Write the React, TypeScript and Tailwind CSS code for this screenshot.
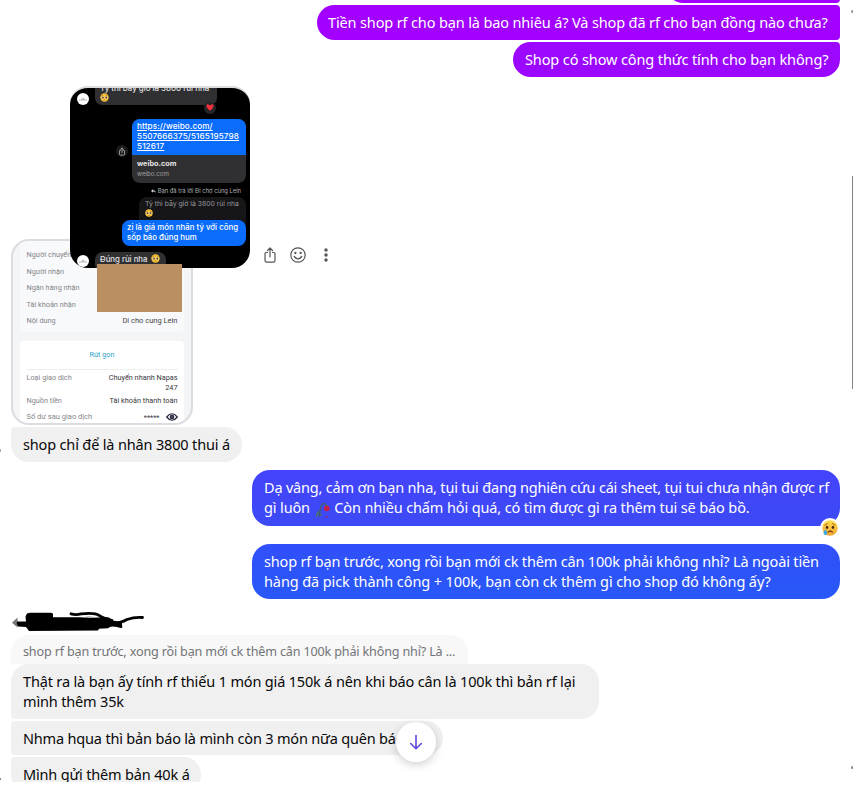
import type { ReactNode } from "react";

function PleadingFace({ className = "" }: { className?: string }) {
  return (
    <svg viewBox="0 0 20 20" className={className}>
      <circle cx="10" cy="10" r="9.3" fill="#f8c53a" />
      <circle cx="6.3" cy="10" r="3" fill="#fff" />
      <circle cx="13.7" cy="10" r="3" fill="#fff" />
      <circle cx="6.3" cy="10.2" r="2.4" fill="#5b3410" />
      <circle cx="13.7" cy="10.2" r="2.4" fill="#5b3410" />
      <circle cx="5.6" cy="9.3" r="0.8" fill="#fff" />
      <circle cx="13" cy="9.3" r="0.8" fill="#fff" />
      <path d="M3.5 6.3 6.5 4.6M16.5 6.3 13.5 4.6M8.3 15.6q1.7-1.2 3.4 0" stroke="#8a4a12" strokeWidth="1" fill="none" strokeLinecap="round" />
    </svg>
  );
}

function CryingFace() {
  return (
    <svg viewBox="0 0 20 20" className="size-4">
      <defs>
        <linearGradient id="cry" x1="0" y1="0" x2="0" y2="1">
          <stop offset="0" stopColor="#ffdf4d" />
          <stop offset="1" stopColor="#f2a431" />
        </linearGradient>
      </defs>
      <circle cx="10" cy="10" r="9.6" fill="url(#cry)" />
      <path d="M3.6 6.4q1.8-.4 3.3-2M16.4 6.4q-1.8-.4-3.3-2" stroke="#8a4d10" strokeWidth="1" fill="none" strokeLinecap="round" />
      <ellipse cx="6.3" cy="9.2" rx="1.5" ry="2" fill="#4a2b12" />
      <ellipse cx="13.7" cy="9.2" rx="1.5" ry="2" fill="#4a2b12" />
      <path d="M7.5 15.200q2.800-2.600 5.600 0" stroke="#6b3710" strokeWidth="1.3" fill="none" strokeLinecap="round" />
      <path d="M4.2 11.600q2.400 3.200 2.400 4.800a2.400 2.400 0 0 1-4.800 0q0-1.600 2.400-4.800z" fill="#3aa6ee" />
    </svg>
  );
}

function WiltedRose() {
  return (
    <svg viewBox="0 0 16 18" className="ml-px mr-0 inline-block h-[18px] w-4 align-[-6px]">
      <path d="M4 16C5 8 6 2.500 9 2.500c1.500 0 2.200.8 2.500 2" stroke="#3f5f5a" strokeWidth="1.200" fill="none" />
      <path d="M4 9.500q-3.500 2.500-3 6.500 2.800-1.500 3-6.500zM4.800 11.500q2.200.8 2.200 4-2.200-.6-2.200-4z" fill="#4f7369" />
      <path d="M9.600 5.400q2.200-2.400 4.300 0 1.400 2.200.2 4-3 1.700-4.900-.3-.8-2 .4-3.700z" fill="#c51f45" />
      <path d="M10.200 4.700q1.200-1.300 2.600-.3l-1 1.300z" fill="#567d50" />
      <path d="M10.500 15.800q1.700-1.300 3 .2-1.700 1-3-.2z" fill="#c51f45" />
    </svg>
  );
}

function ShareIcon({ className = "" }: { className?: string }) {
  return (
    <svg viewBox="0 0 16 18" className={className} fill="none" stroke="currentColor" strokeWidth="1.200" strokeLinecap="round" strokeLinejoin="round">
      <path d="M5.500 6.500H4.200A1.200 1.200 0 0 0 3 7.700v6.800a1.700 1.700 0 0 0 1.700 1.700h6.600a1.700 1.700 0 0 0 1.700-1.700V7.700a1.200 1.200 0 0 0-1.200-1.200h-1.300" />
      <path d="M8 11V2.200M5.500 4.500 8 2l2.500 2.500" />
    </svg>
  );
}

function SmileIcon() {
  return (
    <svg viewBox="0 0 18 18" className="size-[18px]" fill="none" stroke="#555" strokeWidth="1.200" strokeLinecap="round">
      <circle cx="9" cy="9" r="7.200" />
      <path d="M5.200 10.500q3.800 4.600 7.600 0" />
      <circle cx="6.400" cy="7" r=".55" fill="#555" />
      <circle cx="11.600" cy="7" r=".55" fill="#555" />
    </svg>
  );
}

function TinyAvatar() {
  return (
    <div className="flex size-3 shrink-0 items-center justify-center rounded-full bg-white">
      <svg viewBox="0 0 8 4" className="w-2">
        <path d="M0 3h8M2.500 2h3M4 .5v1" stroke="#888" strokeWidth=".6" />
      </svg>
    </div>
  );
}

function Sent({ className = "", children }: { className?: string; children: ReactNode }) {
  return <div className={`self-end whitespace-nowrap pt-[7px] text-[14.5px] leading-5 text-white ${className}`}>{children}</div>;
}

function Received({ className = "", children }: { className?: string; children: ReactNode }) {
  return <div className={`ml-[11px] whitespace-nowrap bg-[#f0f0f0] pl-3 pt-[7px] text-[14.5px] leading-5 text-[#080809] ${className}`}>{children}</div>;
}

function ChatPhoto() {
  return (
    <div className="h-[182px] w-[180px] shrink-0 overflow-hidden rounded-[18px] border-t-2 border-[#dedede] bg-black font-['Inter',sans-serif] text-[#e4e4e6]">
      <div className="flex h-[31px] items-start pl-[7px]">
        <div className="mt-[5px]">
          <TinyAvatar />
        </div>
        <div className="ml-[6px] h-[17px] w-[122px] overflow-hidden rounded-b-[7px] bg-[#303032] pl-[5px]">
          <div className="-mt-[5px] whitespace-nowrap text-[7.900px] font-medium leading-[10px]">Tỷ thì bây giờ là 3800 rùi nha</div>
          <PleadingFace className="size-[9px]" />
        </div>
        <div className="-ml-[13px] mt-[14px] flex size-3 items-center justify-center rounded-full bg-[#252527]">
          <svg viewBox="0 0 10 9" className="w-2">
            <path d="M5 8.500C-2 3.500 1-.3 3 .5Q4.500 1 5 2 5.500 1 7 .5C9-.3 12 3.500 5 8.500z" fill="#f3303c" />
          </svg>
        </div>
      </div>
      <div className="flex items-center justify-end pr-1">
        <div className="mr-[4px] flex size-3 items-center justify-center rounded-full bg-[#1c1c1e]">
          <ShareIcon className="h-[9px] w-[8px]" />
        </div>
        <div className="h-16 w-[114px] overflow-hidden rounded-[8px] bg-[#303032]">
          <div className="h-9 bg-[#0a6cfa] pl-[5px] pt-[3px] text-[8.200px] font-medium leading-[9.800px] tracking-[0.080px] text-white underline">
            https://weibo.com/
            <br />
            5507666375/5165195798
            <br />
            512617
          </div>
          <div className="pl-[5px] pt-1 text-[7.300px] font-bold leading-[9px]">weibo.com</div>
          <div className="pl-[5px] pt-px text-[6.200px] leading-[10px] text-[#a0a0a4]">weibo.com</div>
        </div>
      </div>
      <div className="flex h-[14px] items-center justify-end gap-[2px] pr-[9px] pt-[2px] text-[5.800px] leading-[8px] text-[#b0b0b3]">
        <svg viewBox="0 0 6 5" className="w-[5px]">
          <path d="M0 2.300 2.500 0v1.500Q5.500 1.500 6 4.500 4.500 3 2.500 3v1.500z" fill="#ccc" />
        </svg>
        <span className="whitespace-nowrap">Bạn đã trả lời Đi chợ cùng Lein</span>
      </div>
      <div className="ml-[69px] h-[27px] w-[107px] rounded-t-[8px] bg-[#161618] pl-[6px] pt-[2px] text-[#98989c]">
        <div className="whitespace-nowrap text-[6.850px] leading-[10px]">Tỷ thì bây giờ là 3800 rùi nha</div>
        <PleadingFace className="size-2" />
      </div>
      <div className="-mt-1 ml-[52px] h-[26px] w-[124px] rounded-[8px] bg-[#0a6cfa] pl-[5px] pt-[3px] text-[7.850px] font-medium leading-[9.800px] text-white">
        <div className="whitespace-nowrap">zị là giá món nhân tỷ với công</div>
        <div>sốp báo đúng hum</div>
      </div>
      <div className="mt-[6px] flex pl-[7px]">
        <div className="mt-[3px]">
          <TinyAvatar />
        </div>
        <div className="ml-[6px] flex h-5 w-[71px] items-start gap-1 rounded-[8px] bg-[#303032] pl-[5px] pt-[2px]">
          <span className="whitespace-nowrap text-[7.800px] font-medium leading-[10px]">Đúng rùi nha</span>
          <PleadingFace className="size-[9px]" />
        </div>
      </div>
    </div>
  );
}

function BankPhoto() {
  return (
    <div className="-mt-[29px] ml-[11px] h-[186px] w-[182px] overflow-hidden rounded-[18px] border-2 border-[#dcdce0] bg-[#f4f5f7] px-[7px] font-['Roboto',sans-serif] text-[7.300px] leading-[10px] text-[#85858a]">
      <div className="flex h-[91px] flex-col gap-[6.600px] rounded-b-[4px] bg-[#f8f9fa] px-[6.500px] pt-[9px]">
        <span>Người chuyển</span>
        <span>Người nhận</span>
        <span>Ngân hàng nhận</span>
        <span>Tài khoản nhận</span>
        <div className="flex justify-between">
          <span>Nội dung</span>
          <span className="text-[7.500px] text-[#444449]">Di cho cung Lein</span>
        </div>
      </div>
      <div className="mt-[9px] h-[90px] rounded-t-[4px] bg-white px-[6.500px] pt-[9px]">
        <div className="text-center text-[#2fa3c8]">Rút gọn</div>
        <div className="mt-[9px] h-px bg-[#eeeeef]" />
        <div className="mt-[3px] flex justify-between">
          <span>Loại giao dịch</span>
          <span className="text-right text-[#38383e]">
            Chuyển nhanh Napas
            <br />
            247
          </span>
        </div>
        <div className="mt-[3px] flex justify-between">
          <span>Nguồn tiền</span>
          <span className="text-[#38383e]">Tài khoản thanh toán</span>
        </div>
        <div className="mt-[5px] flex items-center justify-between">
          <span className="text-[7.500px]">Số dư sau giao dịch</span>
          <span className="flex items-center gap-[6px] text-[#38383e]">
            <span className="pt-[2px]">*****</span>
            <svg viewBox="0 0 12 8" className="w-3" fill="none" stroke="#25263a" strokeWidth="1.200">
              <path d="M.7 4Q6-2.500 11.300 4 6 10.500.7 4z" />
              <circle cx="6" cy="4" r="1.700" />
              <circle cx="6" cy="4" r=".5" />
            </svg>
          </span>
        </div>
      </div>
    </div>
  );
}

export default function App() {
  return (
    <div className="relative h-[786px] w-[853px] overflow-hidden bg-white font-['Noto_Sans',sans-serif]">
      <main className="flex h-[782px] w-[840px] flex-col items-start overflow-hidden">
        <div className="h-[3px] w-[174px] shrink-0 self-end overflow-hidden">
          <div className="-mt-8 h-[35px] rounded-l-[18px] rounded-r-[4px] bg-[#a200ff]" />
        </div>
        <Sent className="mt-[2px] h-[35px] w-[523px] shrink-0 rounded-l-[18px] rounded-r-[4px] bg-[#a200ff] pl-[11px] tracking-[-0.137px]">
          Tiền shop rf cho bạn là bao nhiêu á? Và shop đã rf cho bạn đồng nào chưa?
        </Sent>
        <Sent className="mt-[2px] h-[35px] w-[327px] shrink-0 rounded-[18px] rounded-tr-[4px] bg-[#9c08ff] pl-3 tracking-[-0.110px]">
          Shop có show công thức tính cho bạn không?
        </Sent>

        <section className="mt-[9px] shrink-0">
          <div className="relative z-10 ml-[70px] flex items-end">
            <ChatPhoto />
            <div className="mb-1 ml-3 flex items-center gap-[11px] text-[#555]">
              <ShareIcon className="h-[18px] w-4" />
              <SmileIcon />
              <svg viewBox="0 0 16 18" className="h-[18px] w-4" fill="#555">
                <circle cx="8" cy="4" r="1.700" />
                <circle cx="8" cy="9" r="1.700" />
                <circle cx="8" cy="14" r="1.700" />
              </svg>
            </div>
            <div className="absolute left-[27px] top-[178px] h-12 w-[85px] bg-[#ba9063]" />
          </div>
          <BankPhoto />
        </section>

        <Received className="mt-[2px] h-[35px] w-[231px] shrink-0 rounded-[18px] rounded-tl-[4px] tracking-[-0.160px]">shop chỉ để là nhân 3800 thui á</Received>

        <div className="relative mt-[8px] shrink-0 self-end">
          <Sent className="h-14 w-[588px] rounded-[18px] bg-linear-to-b from-[#4443fc] to-[#3c4af5] pl-3">
            <div className="tracking-[-0.190px]">Dạ vâng, cảm ơn bạn nha, tụi tui đang nghiên cứu cái sheet, tụi tui chưa nhận được rf</div>
            <div className="h-5 tracking-[-0.130px]">
              gì luôn <WiltedRose /> Còn nhiều chấm hỏi quá, có tìm được gì ra thêm tui sẽ báo bồ.
            </div>
          </Sent>
          <div className="absolute -bottom-[12px] right-0 flex size-5 items-center justify-center rounded-full bg-white">
            <CryingFace />
          </div>
        </div>
        <Sent className="mt-[18px] h-[55px] w-[588px] shrink-0 rounded-[18px] bg-linear-to-b from-[#314ffa] to-[#2858f8] pl-3">
          <div className="tracking-[-0.170px]">shop rf bạn trước, xong rồi bạn mới ck thêm cân 100k phải không nhỉ? Là ngoài tiền</div>
          <div className="tracking-[-0.100px]">hàng đã pick thành công + 100k, bạn còn ck thêm gì cho shop đó không ấy?</div>
        </Sent>

        <svg viewBox="0 0 136 20" className="ml-[11px] mt-[12px] h-5 w-[136px] shrink-0">
          <path d="M1 11.800 6.500 6.500v10z" fill="#777" />
          <path d="M6 10.500h9l-.5-5 1.500-3 3-.8h21q2 0 2 1.500v3h27l10 .5 18-.5q3 .5 2 3l12 1.500v4l-8 1q-4-.5-6 1.500l-9 .5-1 1.800-69 .5-3-4-8-.5q-2-2.500-1-5z" fill="#000" />
          <path d="M60 2.800q5 1.500 10 0 14-1.500 18 1.500 5 3.500 13 5M98 11q8 4 12 4.500M100 13q10-1 16-4.500 7-2.500 15.500-2" stroke="#000" strokeWidth="2.800" fill="none" strokeLinecap="round" />
          <path d="M75 5.300q5 0 9 1.300" stroke="#aaa" strokeWidth=".7" fill="none" />
        </svg>

        <div className="ml-[11px] mt-[4px] h-[29px] w-[457px] shrink-0 whitespace-nowrap rounded-t-[18px] bg-[#f8f8f8] pl-3 pt-[9px] text-[12.600px] leading-4 tracking-[-0.165px] text-[#727477]">
          shop rf bạn trước, xong rồi bạn mới ck thêm cân 100k phải không nhỉ? Là ...
        </div>
        <Received className="h-[55px] w-[588px] shrink-0 rounded-[18px] rounded-bl-[4px] tracking-[-0.160px]">
          <div>Thật ra là bạn ấy tính rf thiếu 1 món giá 150k á nên khi báo cân là 100k thì bản rf lại</div>
          <div>mình thêm 35k</div>
        </Received>
        <Received className="mt-[2px] h-[34px] w-[432px] shrink-0 rounded-l-[4px] rounded-r-[18px] tracking-[-0.180px]">Nhma hqua thì bản báo là mình còn 3 món nữa quên báo</Received>
        <Received className="mt-[2px] h-[35px] w-[190px] shrink-0 rounded-[18px] rounded-tl-[4px] tracking-[-0.170px]">Mình gửi thêm bản 40k á</Received>
      </main>

      <button className="absolute left-[396px] top-[722px] flex size-10 items-center justify-center rounded-full bg-white shadow-[0_3px_10px_rgba(0,0,0,0.18)]">
        <svg viewBox="0 0 16 16" className="size-4" fill="none" stroke="#5a4ad8" strokeWidth="1.600" strokeLinecap="round" strokeLinejoin="round">
          <path d="M8 1.500v13M2.700 9.500 8 14.700l5.300-5.200" />
        </svg>
      </button>

      <div className="absolute right-0 top-[176px] h-[213px] w-px bg-[#858585]" />
      <div className="absolute right-0 top-[10px] h-[3px] w-[2px] rounded-l-full bg-[#999]" />
      <div className="absolute right-0 top-[766px] h-[3px] w-[2px] rounded-l-full bg-[#888]" />
      <div className="absolute left-0 top-[449px] h-[3px] w-px bg-[#aaa]" />
      <div className="absolute left-0 top-[778px] h-[2px] w-px bg-[#888]" />
    </div>
  );
}
